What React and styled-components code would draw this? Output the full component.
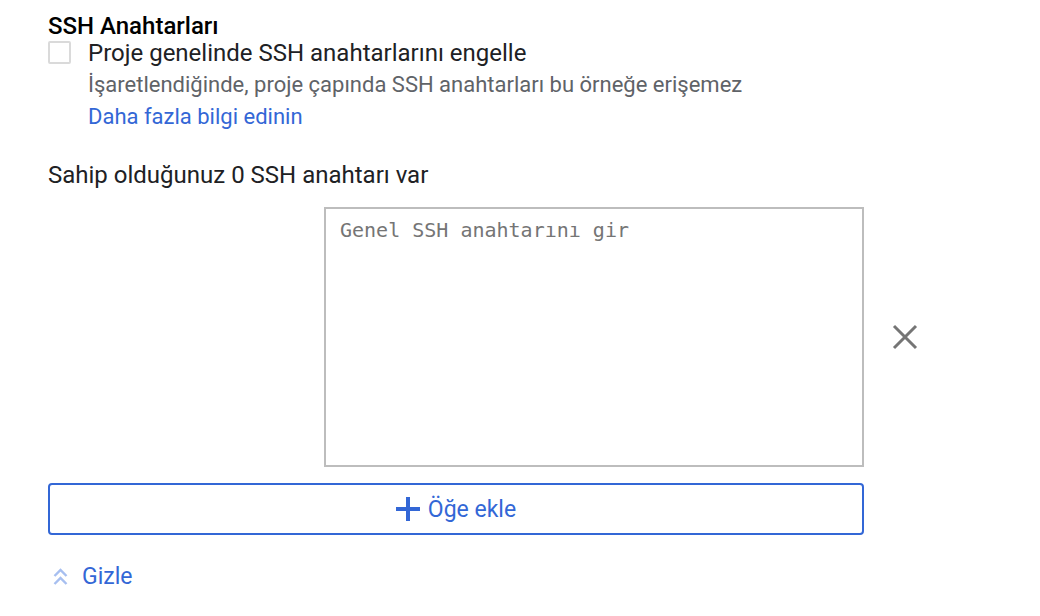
import styled, { createGlobalStyle } from "styled-components";

const GlobalStyle = createGlobalStyle`
  body {
    margin: 0;
    background: #fff;
    font-family: Roboto, "Liberation Sans", Arial, sans-serif;
    color: #212121;
  }
`;

const Section = styled.div`
  width: 816px;
  padding: 15px 0 0 48px;
`;

const Title = styled.div`
  font-size: 24px;
  font-weight: 500;
  line-height: 22px;
  color: #000;
`;

const CheckRow = styled.label`
  display: flex;
  align-items: flex-start;
  gap: 17px;
`;

const Box = styled.span`
  flex: none;
  box-sizing: border-box;
  width: 23px;
  height: 23px;
  margin-top: 4px;
  border: 2px solid #dadada;
  border-radius: 2px;
  background: #fff;
`;

const CheckText = styled.div`
  display: flex;
  flex-direction: column;
`;

const Label = styled.div`
  font-size: 24px;
  line-height: 32px;
  color: #202124;
`;

const Hint = styled.div`
  font-size: 22px;
  line-height: 32px;
  color: #5f6368;
`;

const Link = styled.a`
  font-size: 22px;
  line-height: 32px;
  color: #3367d6;
  text-decoration: none;
`;

const Count = styled.div`
  margin-top: 26px;
  font-size: 24px;
  line-height: 32px;
  color: #202124;
`;

const KeyRow = styled.div`
  display: flex;
  align-items: center;
  margin-top: 16px;
  padding-left: 276px;
  gap: 28px;
`;

const KeyInput = styled.textarea`
  flex: none;
  box-sizing: border-box;
  width: 540px;
  height: 260px;
  margin: 0;
  padding: 8px 14px;
  border: 2px solid #bdbdbd;
  border-radius: 0;
  resize: none;
  outline: none;
  font-family: "DejaVu Sans Mono", "Liberation Mono", monospace;
  font-size: 20px;
  line-height: 26px;
  color: #212121;

  &::placeholder {
    color: #757575;
  }
`;

const IconButton = styled.button`
  flex: none;
  display: flex;
  padding: 0;
  border: 0;
  background: none;
  cursor: pointer;
`;

const AddButton = styled.button`
  display: flex;
  align-items: center;
  justify-content: center;
  gap: 8px;
  box-sizing: border-box;
  width: 816px;
  height: 52px;
  margin-top: 16px;
  border: 2px solid #3367d6;
  border-radius: 4px;
  background: #fff;
  color: #3367d6;
  font-family: inherit;
  font-size: 23px;
  font-weight: 400;
  cursor: pointer;
`;

const Toggle = styled.div`
  display: flex;
  align-items: center;
  gap: 14px;
  margin-top: 26px;
  padding-left: 5px;
  font-size: 23px;
  line-height: 32px;
  color: #3367d6;
`;

const CloseIcon = () => (
  <svg width="26" height="26" viewBox="0 0 26 26">
    <path d="M2 2 L24 24 M24 2 L2 24" stroke="#757575" strokeWidth="3" />
  </svg>
);

const PlusIcon = () => (
  <svg width="24" height="24" viewBox="0 0 24 24">
    <path d="M12 0 V24 M0 12 H24" stroke="#3367d6" strokeWidth="4" />
  </svg>
);

const ChevronsUp = () => (
  <svg width="15" height="18" viewBox="0 0 15 18">
    <path
      d="M1.5 8 L7.5 2 L13.5 8 M1.5 16 L7.5 10 L13.5 16"
      fill="none"
      stroke="#a7bff0"
      strokeWidth="2.4"
    />
  </svg>
);

export default function App() {
  return (
    <>
      <GlobalStyle />
      <Section>
        <Title>SSH Anahtarları</Title>
        <CheckRow>
          <Box />
          <CheckText>
            <Label>Proje genelinde SSH anahtarlarını engelle</Label>
            <Hint>İşaretlendiğinde, proje çapında SSH anahtarları bu örneğe erişemez</Hint>
            <Link href="#">Daha fazla bilgi edinin</Link>
          </CheckText>
        </CheckRow>
        <Count>Sahip olduğunuz 0 SSH anahtarı var</Count>
        <KeyRow>
          <KeyInput placeholder="Genel SSH anahtarını gir" />
          <IconButton aria-label="Kaldır">
            <CloseIcon />
          </IconButton>
        </KeyRow>
        <AddButton>
          <PlusIcon />
          Öğe ekle
        </AddButton>
        <Toggle>
          <ChevronsUp />
          Gizle
        </Toggle>
      </Section>
    </>
  );
}
